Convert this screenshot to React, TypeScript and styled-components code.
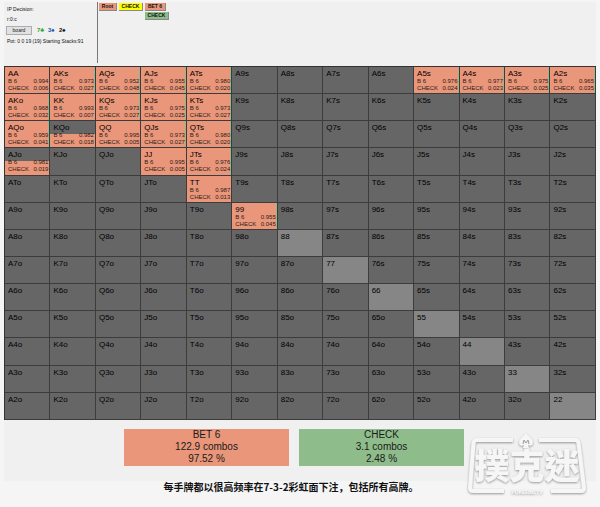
import React from "react";
import styled, { createGlobalStyle } from "styled-components";

const FONT = `"Liberation Sans", Arial, sans-serif`;

const GlobalStyle = createGlobalStyle`
  * { box-sizing: border-box; }
  body {
    margin: 0;
    background: #f5f5f5;
    color: #1a1a1a;
    font-family: ${FONT};
  }
`;

const ORANGE = "#e9967a";
const GREEN = "#8fbc8b";

const Page = styled.main`
  position: relative;
  min-height: 507px;
  padding: 2px 4px 0;
`;

const Solver = styled.section`
  background: #f0f0f0;
  padding-bottom: 15px;
`;

const Header = styled.header`
  display: grid;
  grid-template-columns: 93px 1fr;
  height: 64px;
`;

const Decision = styled.div`
  display: flex;
  flex-direction: column;
  padding: 2px 0 0 3px;
  color: #111;
  font-size: 5px;
  line-height: 10px;
  white-space: nowrap;
`;

const BoardRow = styled.div`
  display: flex;
  align-items: center;
  gap: 5px;
  height: 12px;
`;

const BoardButton = styled.button`
  width: 26px;
  height: 9px;
  margin-left: -1px;
  padding: 0;
  border: 1px solid #adadad;
  background: #e1e1e1;
  color: #1a1a1a;
  font: 5px/7px ${FONT};
`;

const Card = styled.span<{ $color: string }>`
  width: 6px;
  color: ${(p) => p.$color};
  font-size: 6px;
  font-weight: bold;
`;

const History = styled.nav`
  display: flex;
  align-items: flex-start;
  gap: 2px;
  height: 61px;
  padding: 1px 0 0 1px;
  border-left: 1px solid #777;
`;

const Branch = styled.div`
  display: flex;
  flex-direction: column;
  align-items: flex-start;
  gap: 1px;
`;

const stepWidths = { small: 18, medium: 21, large: 24 };

const Step = styled.button<{ $fill: string; $size: keyof typeof stepWidths }>`
  width: ${(p) => stepWidths[p.$size]}px;
  height: 8px;
  padding: 0;
  border: 0;
  border-right: 1px solid #888;
  border-bottom: 1px solid #888;
  background: ${(p) => p.$fill};
  color: #111;
  font: bold 5px/7px ${FONT};
  white-space: nowrap;
`;

const RangeTable = styled.table`
  width: 100%;
  height: 354px;
  table-layout: fixed;
  border-spacing: 0;
  border-top: 1px solid #333;
  border-left: 1px solid #333;
`;

const fills: Record<string, string> = {
  none: "#666",
  pair: "#868686",
  full: ORANGE,
  mixed: `linear-gradient(to left, ${GREEN} 1px, ${ORANGE} 1px)`,
  partial: `linear-gradient(#666 13px, ${ORANGE} 13px)`,
};

const Cell = styled.td<{ $kind: string }>`
  height: 27px;
  padding: 0;
  vertical-align: top;
  border-right: 1px solid #3c3c3c;
  border-bottom: 1px solid #3c3c3c;
  background: ${(p) => fills[p.$kind]} padding-box;
`;

const Hand = styled.div`
  padding: 2px 0 0 3px;
  color: #000;
  font-size: 8px;
  line-height: 9px;
`;

const Freq = styled.div`
  display: flex;
  justify-content: space-between;
  padding: 0 1px 0 3px;
  color: #2c1c16;
  font-size: 6px;
  line-height: 7px;
`;

const Summary = styled.div`
  display: grid;
  grid-template-columns: 1fr 1fr;
  gap: 10px;
  margin: 9px 132px 0 120px;
`;

const Total = styled.div<{ $fill: string }>`
  padding-bottom: 1px;
  background: ${(p) => p.$fill};
  font-size: 10px;
  line-height: 12px;
  text-align: center;
`;

const Caption = styled.p`
  margin: 0;
  padding-right: 18px;
  color: #111;
  font: bold 10px/12px "Noto Sans CJK SC", sans-serif;
  text-align: center;
`;

const Watermark = styled.svg`
  position: absolute;
  right: 10px;
  bottom: 6px;
  width: 124px;
  height: 70px;
`;

const frequencies: Record<string, number> = {
  AA: 994, AKs: 973, AQs: 952, AJs: 955, ATs: 980, A5s: 976, A4s: 977, A3s: 975, A2s: 965,
  AKo: 968, KK: 993, KQs: 973, KJs: 975, KTs: 973,
  AQo: 959, KQo: 982, QQ: 995, QJs: 973, QTs: 980,
  AJo: 981, JJ: 995, JTs: 976, TT: 987, 99: 955,
};
const ranks = "AKQJT98765432".split("");
const partialHands = ["KQo", "AJo"];

const handAt = (row: number, col: number) =>
  row === col
    ? ranks[row] + ranks[col]
    : row < col
      ? `${ranks[row]}${ranks[col]}s`
      : `${ranks[col]}${ranks[row]}o`;

function HandCell({ row, col }: { row: number; col: number }) {
  const hand = handAt(row, col);
  const bet = frequencies[hand];
  let kind = row === col ? "pair" : "none";
  if (bet) kind = partialHands.includes(hand) ? "partial" : bet < 983 ? "mixed" : "full";
  return (
    <Cell $kind={kind}>
      <Hand>{hand}</Hand>
      {bet && (
        <>
          <Freq><span>B 6</span><span>{(bet / 1000).toFixed(3)}</span></Freq>
          <Freq><span>CHECK</span><span>{((1000 - bet) / 1000).toFixed(3)}</span></Freq>
        </>
      )}
    </Cell>
  );
}

function Logo() {
  return (
    <Watermark viewBox="0 0 124 70" role="img" aria-label="撲克迷">
      <defs>
        <filter id="shade" x="-10%" y="-10%" width="120%" height="130%">
          <feDropShadow dx="0" dy="1" stdDeviation="1" floodColor="#777" floodOpacity="0.75" />
        </filter>
      </defs>
      <g filter="url(#shade)" fill="#f6f6f6">
        <path
          d="M47 9H11Q8 9 7.500 12L4 57Q4 60 7 60H38M73 9H109Q112 9 112.500 12L118 57Q118 60 115 60H85"
          fill="none" stroke="#f6f6f6" strokeWidth="4"
        />
        <path d="M60 2C57 6 53 8 53 12Q54 16 58 14L57 17H63L62 14Q66 16 67 12C67 8 63 6 60 2Z" />
        <text x="61" y="48" textAnchor="middle" fontFamily="Noto Sans CJK TC, sans-serif" fontWeight="900" fontSize="35">撲克迷</text>
        <text x="61" y="63" textAnchor="middle" fontFamily="Liberation Sans, sans-serif" fontWeight="700" fontSize="5">POKERMI.TV</text>
      </g>
      <path d="M57 13L58 9L60 12L62 9L63 13" fill="none" stroke="#999" />
    </Watermark>
  );
}

export default function App() {
  return (
    <Page>
      <GlobalStyle />
      <Solver>
        <Header>
          <Decision>
            <span>IP Decision:</span>
            <span>r:0:c</span>
            <BoardRow>
              <BoardButton type="button">board</BoardButton>
              <Card $color="#2fa836">7♣</Card>
              <Card $color="#2456a8">3♠</Card>
              <Card $color="#111">2♠</Card>
            </BoardRow>
            <span>Pot: 0 0 19 (19) Starting Stacks:91</span>
          </Decision>
          <History>
            <Step type="button" $fill={ORANGE} $size="small">Root</Step>
            <Step type="button" $fill="#ff0" $size="large">CHECK</Step>
            <Branch>
              <Step type="button" $fill={ORANGE} $size="medium">BET 6</Step>
              <Step type="button" $fill={GREEN} $size="large">CHECK</Step>
            </Branch>
          </History>
        </Header>
        <RangeTable>
          <tbody>
            {ranks.map((rank, row) => (
              <tr key={rank}>
                {ranks.map((other, col) => <HandCell key={other} row={row} col={col} />)}
              </tr>
            ))}
          </tbody>
        </RangeTable>
        <Summary>
          <Total $fill={ORANGE}>BET 6<br />122.9 combos<br />97.52 %</Total>
          <Total $fill={GREEN}>CHECK<br />3.1 combos<br />2.48 %</Total>
        </Summary>
      </Solver>
      <Caption>每手牌都以很高频率在7-3-2彩虹面下注，包括所有高牌。</Caption>
      <Logo />
    </Page>
  );
}
